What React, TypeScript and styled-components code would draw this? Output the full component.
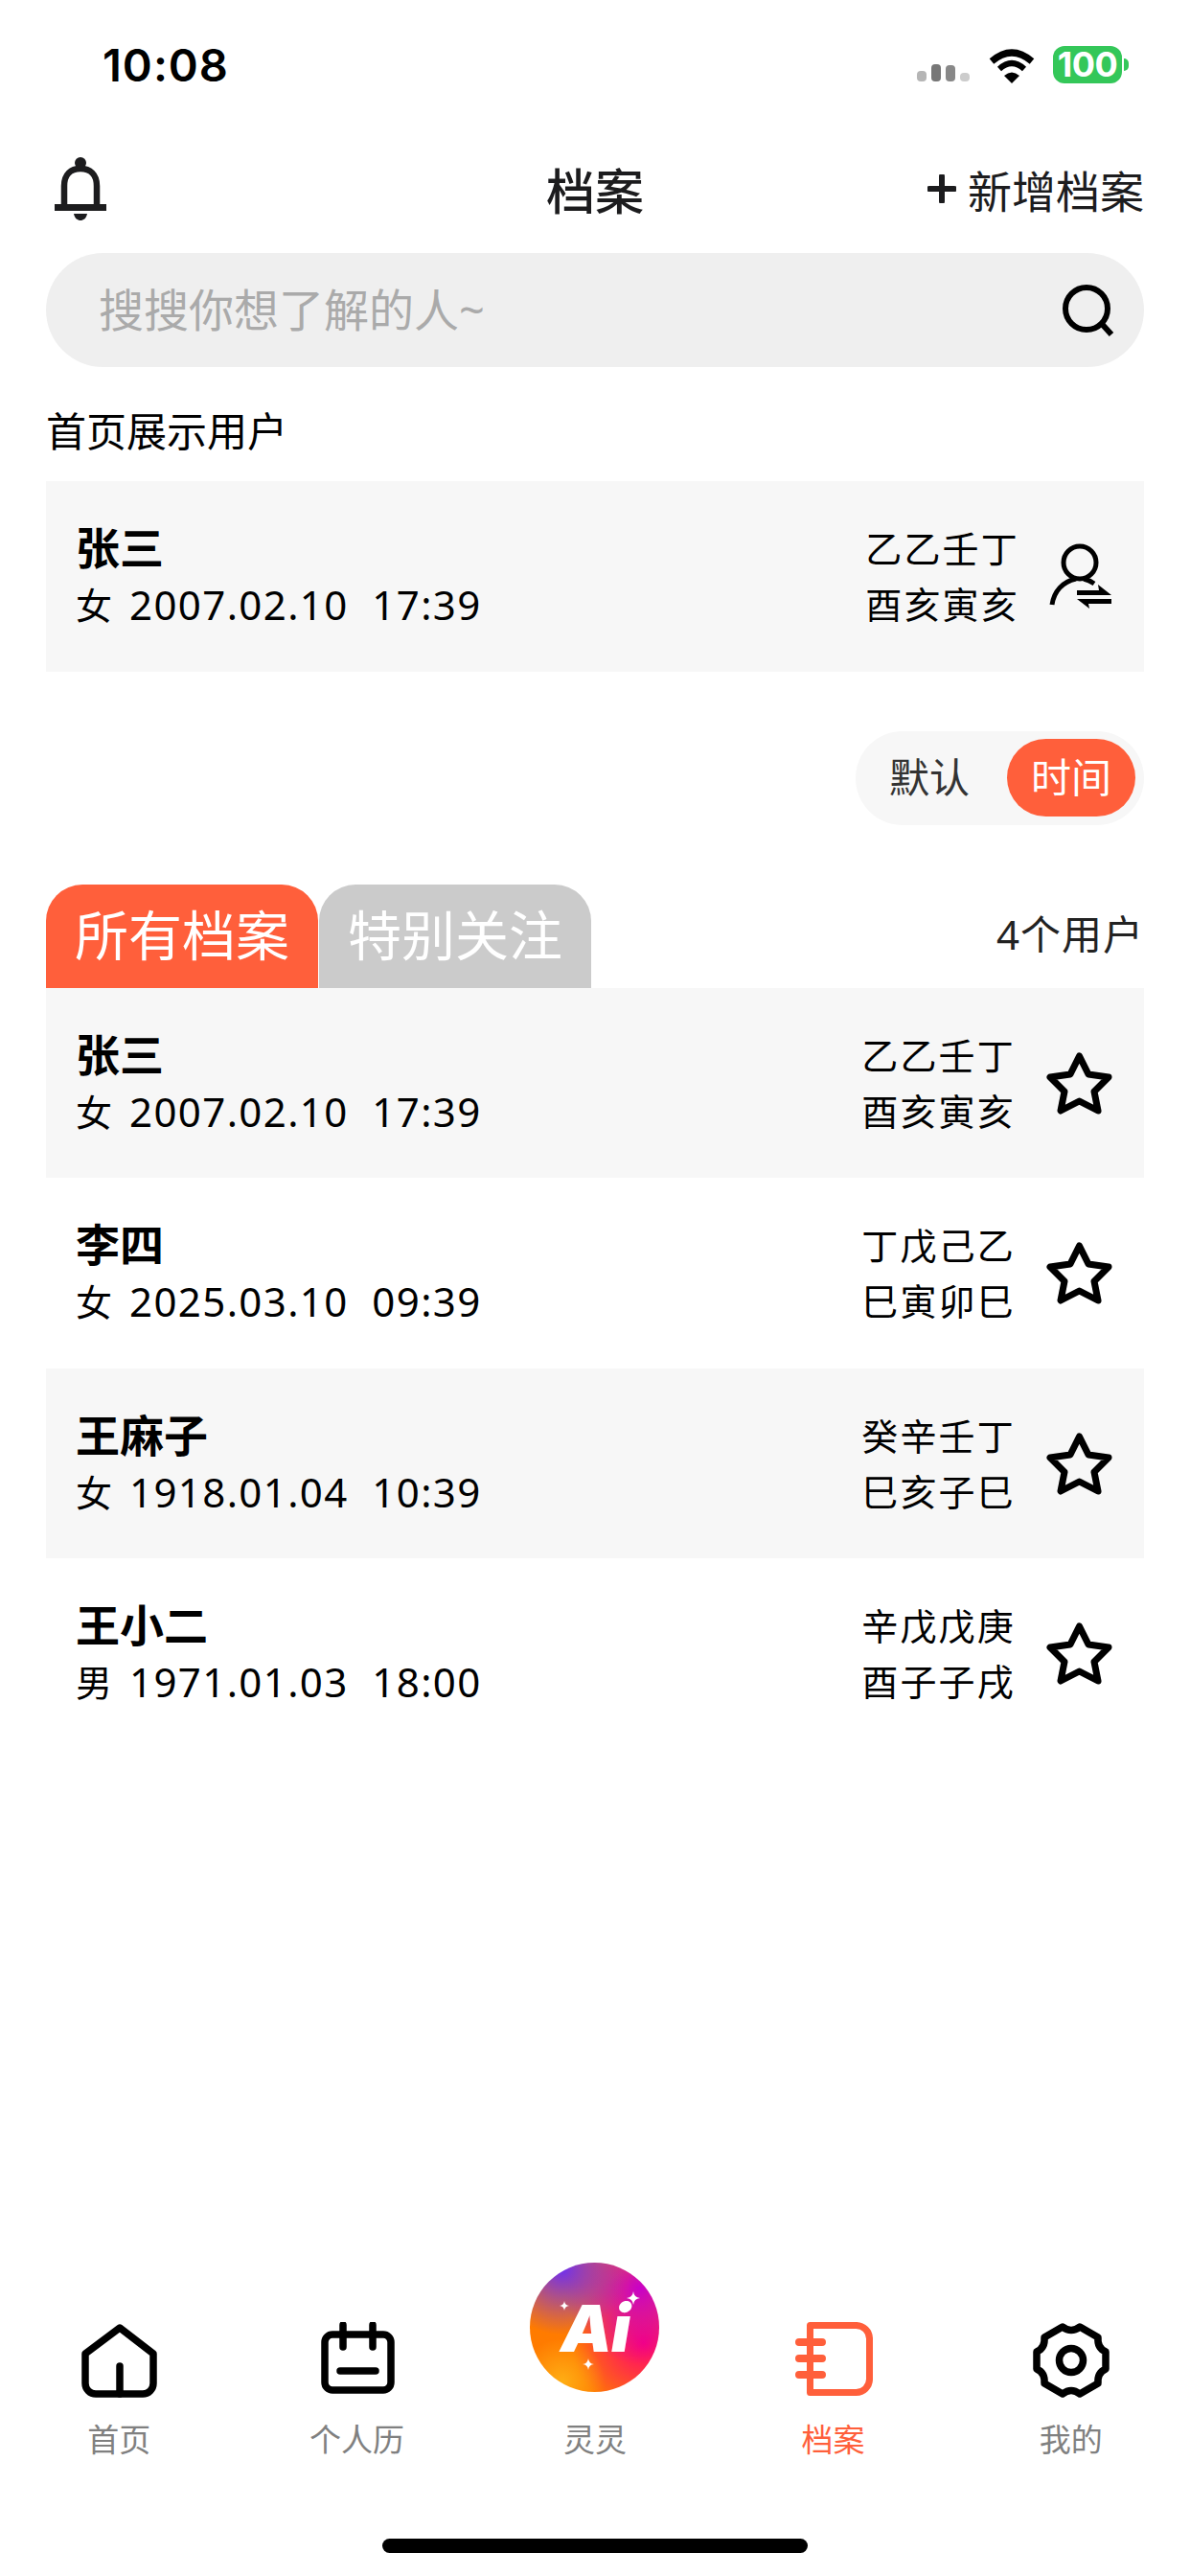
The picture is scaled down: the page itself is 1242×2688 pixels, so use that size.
import React, {FC} from 'react';
import styled, {createGlobalStyle} from 'styled-components';

const ORANGE = '#ff5f3b';

const GlobalStyle = createGlobalStyle`
  html, body {
    margin: 0;
    padding: 0;
    background: #fff;
  }
  * {
    box-sizing: border-box;
  }
`;

const Page = styled.div`
  width: 1242px;
  height: 2688px;
  display: flex;
  flex-direction: column;
  background: #fff;
  color: #000;
  font-family: "Noto Sans", "Noto Sans CJK SC", sans-serif;
  overflow: hidden;
`;

const StatusBar = styled.div`
  height: 150px;
  padding: 0 71px 16px 107px;
  display: flex;
  align-items: center;
  justify-content: space-between;
`;

const Clock = styled.div`
  font-family: Inter, sans-serif;
  font-size: 47px;
  font-weight: 600;
  letter-spacing: 1px;
  line-height: 1;
`;

const StatusIcons = styled.div`
  display: flex;
  align-items: flex-end;
  height: 39px;
`;

const Signal = styled.div`
  display: flex;
  align-items: flex-end;
  gap: 5px;
  margin-right: 20px;
  margin-bottom: 2px;
`;

const SignalBar = styled.i<{$h: number; $c: string}>`
  display: block;
  width: 10px;
  height: ${p => p.$h}px;
  border-radius: 4px;
  background: ${p => p.$c};
`;

const Battery = styled.div`
  width: 72px;
  height: 39px;
  margin-left: 19px;
  border-radius: 12px;
  background: #34c759;
  color: #fff;
  font-family: Inter, sans-serif;
  font-size: 36px;
  font-weight: 700;
  line-height: 39px;
  text-align: center;
  letter-spacing: -0.5px;
  position: relative;
  &::after {
    content: '';
    position: absolute;
    right: -7px;
    top: 13px;
    width: 5px;
    height: 13px;
    border-radius: 0 6px 6px 0;
    background: #34c759;
  }
`;

const Header = styled.div`
  height: 114px;
  padding: 0 48px 20px;
  display: grid;
  grid-template-columns: 1fr auto 1fr;
  align-items: center;
`;

const BellButton = styled.div`
  display: flex;
  padding-left: 9px;
`;

const Title = styled.div`
  font-size: 51px;
  font-weight: 500;
  color: #1c1c1e;
`;

const AddButton = styled.div`
  display: flex;
  justify-content: flex-end;
  align-items: center;
  gap: 12px;
  font-size: 46px;
  color: #1c1c1e;
`;

const SearchBar = styled.div`
  height: 119px;
  margin: 0 48px;
  padding: 0 31px 0 55px;
  display: flex;
  align-items: center;
  justify-content: space-between;
  border-radius: 60px;
  background: #efefef;
`;

const Placeholder = styled.div`
  padding-bottom: 6px;
  font-size: 47px;
  color: #aaa;
`;

const SectionLabel = styled.div`
  height: 60px;
  margin: 37px 48px 22px;
  font-size: 42px;
  line-height: 60px;
`;

const Row = styled.div<{$tint: boolean}>`
  height: 198.5px;
  margin: 0 48px;
  padding: 0 33px 0 31px;
  display: flex;
  align-items: center;
  background: ${p => (p.$tint ? '#f7f7f7' : '#fff')};
`;

const Info = styled.div`
  flex: 1;
`;

const Name = styled.div`
  margin-top: -2px;
  font-size: 46px;
  font-weight: 700;
  line-height: 62px;
`;

const Detail = styled.div`
  display: flex;
  align-items: center;
  font-size: 42px;
  line-height: 58px;
  white-space: pre;
  letter-spacing: 1.4px;
`;

const Sex = styled.span`
  margin-right: 18px;
  font-size: 38px;
  letter-spacing: 0;
`;

const Pillars = styled.div<{$gap: number}>`
  margin-right: ${p => p.$gap}px;
  font-size: 38px;
  letter-spacing: 2.2px;
  line-height: 58px;
`;

const SortWrap = styled.div`
  margin: 62px 48px 0;
  display: flex;
  justify-content: flex-end;
`;

const SortPill = styled.div`
  width: 301px;
  height: 98px;
  padding: 9px 9px 9px 35px;
  display: flex;
  align-items: center;
  justify-content: space-between;
  border-radius: 49px;
  background: #f7f7f7;
`;

const SortOption = styled.div<{$active?: boolean}>`
  width: ${p => (p.$active ? '134px' : 'auto')};
  height: 81px;
  border-radius: 41px;
  font-size: 42px;
  line-height: 79px;
  text-align: center;
  color: ${p => (p.$active ? '#fff' : '#333')};
  background: ${p => (p.$active ? ORANGE : 'transparent')};
`;

const TabBar = styled.div`
  height: 108px;
  margin: 62px 48px 0;
  display: flex;
`;

const Tab = styled.div<{$active?: boolean}>`
  width: 284px;
  margin-right: 1px;
  border-radius: 38px 38px 0 0;
  font-size: 56px;
  line-height: 104px;
  text-align: center;
  color: #fff;
  background: ${p => (p.$active ? ORANGE : '#cbcbcb')};
`;

const Count = styled.div`
  margin-left: auto;
  font-size: 42px;
  letter-spacing: 1px;
  line-height: 104px;
  color: #222;
`;

const Nav = styled.div`
  margin-top: auto;
  padding-bottom: 119px;
  display: grid;
  grid-template-columns: repeat(5, 1fr);
  align-items: end;
`;

const NavItem = styled.div<{$active?: boolean}>`
  display: flex;
  flex-direction: column;
  align-items: center;
  font-size: 33px;
  color: ${p => (p.$active ? ORANGE : '#808080')};
`;

const NavIcon = styled.div`
  height: 80px;
  display: flex;
  justify-content: center;
`;

const NavLabel = styled.div`
  margin-top: 20px;
  line-height: 46px;
`;

const AiLogo = styled.div`
  width: 135px;
  height: 135px;
  margin-bottom: 7px;
  display: flex;
  align-items: center;
  justify-content: center;
  position: relative;
  border-radius: 50%;
  color: #fff;
  font-family: Inter, sans-serif;
  font-size: 68px;
  font-style: italic;
  font-weight: 900;
  letter-spacing: -1px;
  background:
    radial-gradient(circle at 25% 92%, #ffae14 0, rgba(255, 174, 20, 0) 28%),
    radial-gradient(circle at 25% 5%, #6f2ff0 0, rgba(111, 47, 240, 0) 42%),
    radial-gradient(circle at 85% 20%, #c800c8 0, rgba(200, 0, 200, 0) 50%),
    radial-gradient(circle at 88% 62%, #ff0072 0, rgba(255, 0, 114, 0) 52%),
    #ff7b00;
`;

const SparkleMark = styled.svg<{$x: number; $y: number; $s: number}>`
  position: absolute;
  left: ${p => p.$x - p.$s}px;
  top: ${p => p.$y - p.$s}px;
  width: ${p => p.$s * 2}px;
  height: ${p => p.$s * 2}px;
`;

const HomeIndicator = styled.div`
  position: absolute;
  left: 399px;
  top: 2649px;
  width: 444px;
  height: 15px;
  border-radius: 8px;
  background: #000;
`;

const Sparkle: FC<{x: number; y: number; s: number}> = ({x, y, s}) => (
  <SparkleMark $x={x} $y={y} $s={s} viewBox="-10 -10 20 20">
    <path d="M0 -10 Q1 -1 10 0 Q1 1 0 10 Q-1 1 -10 0 Q-1 -1 0 -10 Z" fill="#fff" />
  </SparkleMark>
);

const Wifi: FC = () => (
  <svg width="48" height="36" viewBox="0 0 48 36">
    <path d="M3 13 Q24 -5 45 13" fill="none" stroke="#000" strokeWidth="7" />
    <path d="M11 21 Q24 9 37 21" fill="none" stroke="#000" strokeWidth="6" />
    <path d="M16 28 Q24 21 32 28 L24 36 Z" fill="#000" />
  </svg>
);

const Bell: FC = () => (
  <svg width="54" height="68" viewBox="0 0 54 68">
    <path d="M10 52 V31 C10 19 17 13 27 13 C37 13 44 19 44 31 V52" fill="none" stroke="#1c1c1e" strokeWidth="6.5" />
    <circle cx="27" cy="7" r="6" fill="#1c1c1e" />
    <rect x="22" y="6" width="10" height="9" fill="#1c1c1e" />
    <rect x="0" y="50" width="54" height="7" fill="#1c1c1e" />
    <path d="M20 60 H34 C33 65 30 67 27 67 C24 67 21 65 20 60 Z" fill="#1c1c1e" />
  </svg>
);

const Plus: FC = () => (
  <svg width="30" height="30" viewBox="0 0 30 30">
    <path d="M15 2 V28 M2 15 H28" stroke="#1c1c1e" strokeWidth="6" strokeLinecap="round" />
  </svg>
);

const SearchIcon: FC = () => (
  <svg width="54" height="55" viewBox="0 0 54 55">
    <circle cx="25" cy="26" r="22" fill="none" stroke="#000" strokeWidth="6" />
    <path d="M41 42 L51 53" stroke="#000" strokeWidth="6" />
  </svg>
);

const SwitchUser: FC = () => (
  <svg width="66" height="68" viewBox="0 0 66 68">
    <circle cx="32" cy="20" r="17" fill="none" stroke="#000" strokeWidth="5" />
    <path d="M3 64 C5 50 14 40 28 37 M36 37 C40 38 44 40 47 42" fill="none" stroke="#000" strokeWidth="5" />
    <path d="M29 49 H52 L51 43 L65 54 H29 Z" fill="#000" />
    <path d="M65 58 H29 L42 68 L41 63 H65 Z" fill="#000" />
  </svg>
);

const Star: FC = () => (
  <svg width="69" height="66" viewBox="0 0 69 66">
    <path
      d="M34.5 5 L44 24 L65 27 L50 42 L54 62 L34.5 52 L15 62 L19 42 L4 27 L25 24 Z"
      fill="none"
      stroke="#000"
      strokeWidth="7"
      strokeLinejoin="round"
    />
  </svg>
);

const HomeIcon: FC = () => (
  <svg width="80" height="80" viewBox="0 0 80 80" fill="none" stroke="#000" strokeWidth="7.5" strokeLinejoin="round" strokeLinecap="round">
    <path d="M41 6 L76 33 V64 A11 11 0 0 1 65 75 H16 A11 11 0 0 1 5 64 V33 Z" />
    <path d="M41 46 V75" />
  </svg>
);

const CalendarIcon: FC = () => (
  <svg width="80" height="80" viewBox="0 0 80 80" fill="none" stroke="#000" strokeWidth="7.5" strokeLinecap="round">
    <rect x="6" y="13" width="69" height="58" rx="8" />
    <path d="M25 3 V26 M56 3 V26 M22 51 H59" />
  </svg>
);

const ArchiveIcon: FC = () => (
  <svg width="84" height="80" viewBox="0 0 84 80" fill="none" stroke={ORANGE} strokeLinecap="round">
    <path d="M18.5 3.5 H66 A14 14 0 0 1 80.5 18 V59 A14 14 0 0 1 66 73.5 H18.5 Z" strokeWidth="7" strokeLinejoin="round" />
    <path d="M7 21 H31 M7 38 H31 M7 55 H31" strokeWidth="8" />
  </svg>
);

const GearIcon: FC = () => (
  <svg width="80" height="80" viewBox="0 0 80 80" fill="none" stroke="#000" strokeWidth="7.5" strokeLinejoin="round">
    <path d="M31 5 Q40 12 49 5 L68 16 Q67 27 76 31 V49 Q67 53 68 64 L49 75 Q40 68 31 75 L12 64 Q13 53 4 49 V31 Q13 27 12 16 Z" />
    <circle cx="40" cy="40" r="12.5" />
  </svg>
);

interface IProfile {
  name: string;
  sex: string;
  birth: string;
  stems: string;
  branches: string;
}

const profiles: IProfile[] = [
  {name: '张三', sex: '女', birth: '2007.02.10  17:39', stems: '乙乙壬丁', branches: '酉亥寅亥'},
  {name: '李四', sex: '女', birth: '2025.03.10  09:39', stems: '丁戊己乙', branches: '巳寅卯巳'},
  {name: '王麻子', sex: '女', birth: '1918.01.04  10:39', stems: '癸辛壬丁', branches: '巳亥子巳'},
  {name: '王小二', sex: '男', birth: '1971.01.03  18:00', stems: '辛戊戊庚', branches: '酉子子戌'},
];

const App: FC = () => {
  return (
    <Page>
      <GlobalStyle />
      <StatusBar>
        <Clock>10:08</Clock>
        <StatusIcons>
          <Signal>
            <SignalBar $h={11} $c="#b5b5b5" />
            <SignalBar $h={18} $c="#777" />
            <SignalBar $h={17} $c="#888" />
            <SignalBar $h={9} $c="#ccc" />
          </Signal>
          <Wifi />
          <Battery>100</Battery>
        </StatusIcons>
      </StatusBar>
      <Header>
        <BellButton><Bell /></BellButton>
        <Title>档案</Title>
        <AddButton><Plus />新增档案</AddButton>
      </Header>
      <SearchBar>
        <Placeholder>搜搜你想了解的人~</Placeholder>
        <SearchIcon />
      </SearchBar>
      <SectionLabel>首页展示用户</SectionLabel>
      <Row $tint>
        <Info>
          <Name>张三</Name>
          <Detail><Sex>{profiles[0].sex}</Sex>{profiles[0].birth}</Detail>
        </Info>
        <Pillars $gap={31}>
          <div>{profiles[0].stems}</div>
          <div>{profiles[0].branches}</div>
        </Pillars>
        <SwitchUser />
      </Row>
      <SortWrap>
        <SortPill>
          <SortOption>默认</SortOption>
          <SortOption $active>时间</SortOption>
        </SortPill>
      </SortWrap>
      <TabBar>
        <Tab $active>所有档案</Tab>
        <Tab>特别关注</Tab>
        <Count>4个用户</Count>
      </TabBar>
      {profiles.map((profile: IProfile, key: number) => {
        return (
          <Row key={key} $tint={key % 2 === 0}>
            <Info>
              <Name>{profile.name}</Name>
              <Detail><Sex>{profile.sex}</Sex>{profile.birth}</Detail>
            </Info>
            <Pillars $gap={32}>
              <div>{profile.stems}</div>
              <div>{profile.branches}</div>
            </Pillars>
            <Star />
          </Row>
        );
      })}
      <Nav>
        <NavItem>
          <NavIcon><HomeIcon /></NavIcon>
          <NavLabel>首页</NavLabel>
        </NavItem>
        <NavItem>
          <NavIcon><CalendarIcon /></NavIcon>
          <NavLabel>个人历</NavLabel>
        </NavItem>
        <NavItem>
          <AiLogo>
            Ai
            <Sparkle x={108} y={37} s={7} />
            <Sparkle x={36} y={45} s={5} />
            <Sparkle x={61} y={106} s={6} />
          </AiLogo>
          <NavLabel>灵灵</NavLabel>
        </NavItem>
        <NavItem $active>
          <NavIcon><ArchiveIcon /></NavIcon>
          <NavLabel>档案</NavLabel>
        </NavItem>
        <NavItem>
          <NavIcon><GearIcon /></NavIcon>
          <NavLabel>我的</NavLabel>
        </NavItem>
      </Nav>
      <HomeIndicator />
    </Page>
  );
};

export default App;
